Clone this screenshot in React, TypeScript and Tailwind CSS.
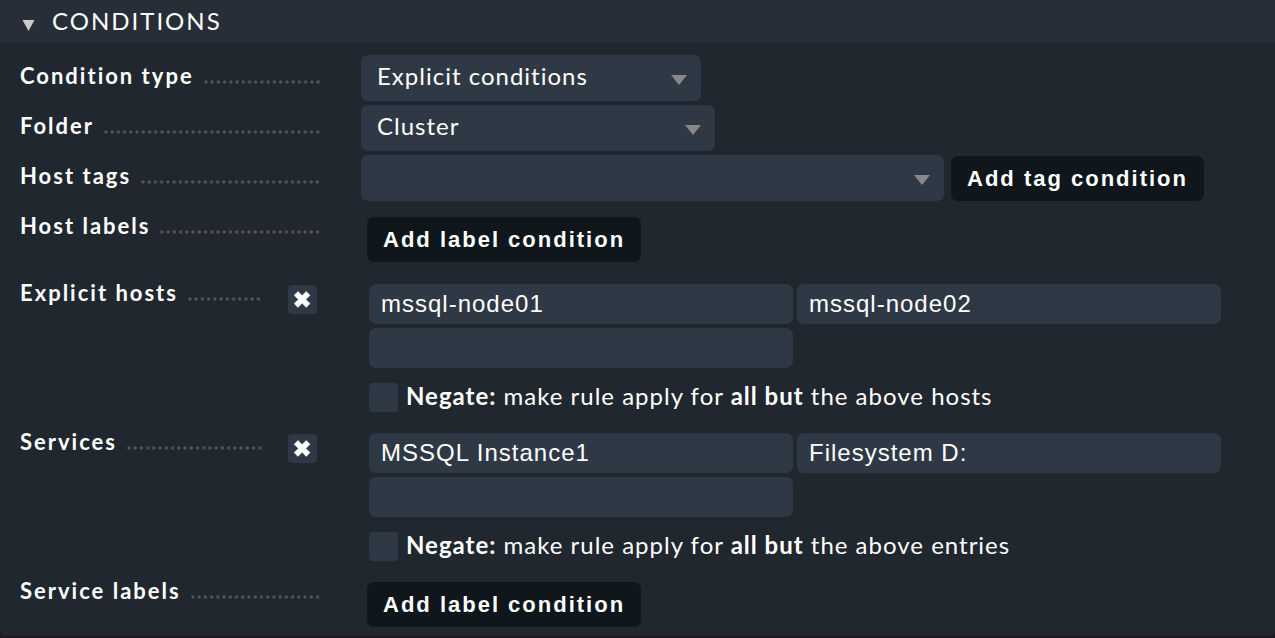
import { useId, useState, type ReactNode } from "react";

const LATO = "font-[Lato,sans-serif]";
const ARIAL = "font-['Liberation_Sans',Arial,sans-serif]";

function DottedLeader() {
  const id = useId();
  return (
    <svg className="mt-[25px] h-1 min-w-0 flex-1" aria-hidden="true">
      <defs>
        <pattern id={id} width="6.23" height="4" patternUnits="userSpaceOnUse">
          <circle cx="1.9" cy="2" r="1.7" fill="#50545b" />
        </pattern>
      </defs>
      <rect width="100%" height="4" fill={`url(#${id})`} />
    </svg>
  );
}

function Row({ label, toggle, children }: { label: string; toggle?: boolean; children: ReactNode }) {
  const id = useId();
  return (
    <div className="flex items-start">
      <div className="flex w-[361px] shrink-0 pl-5">
        <div
          className={`flex ${toggle ? "w-[241px]" : "w-[300px]"} shrink-0 items-start gap-[10px] text-[22px] leading-[42px] font-bold tracking-[2px] whitespace-nowrap`}
        >
          {toggle ? <label htmlFor={id}>{label}</label> : <span>{label}</span>}
          <DottedLeader />
        </div>
        {toggle && (
          <div className="relative mt-[13px] ml-[27px] size-[29px]">
            <input
              id={id}
              type="checkbox"
              defaultChecked
              className="peer block size-full appearance-none rounded-[4px] bg-[#2f3945]"
            />
            <svg
              viewBox="0 0 29 29"
              className="pointer-events-none absolute inset-0 hidden size-full peer-checked:block"
              aria-hidden="true"
            >
              <path
                d="M10 6.400l4.100 4.200 4.100-4.200 3.900 3.900-4.300 4.100 4.300 4.200-3.900 3.800-4.100-4.100-4.100 4.100-3.900-3.800 4.300-4.200-4.300-4.100z"
                fill="#fff"
                stroke="#fff"
                strokeWidth="0.4"
                strokeLinejoin="round"
              />
            </svg>
          </div>
        )}
      </div>
      <div className="min-w-0 flex-1">{children}</div>
    </div>
  );
}

function Dropdown({ label, value, width }: { label: string; value: string; width: string }) {
  return (
    <div className={`relative mb-1 h-[46px] ${width}`}>
      <select
        aria-label={label}
        className="block size-full appearance-none rounded-[7px] bg-[#2f3945] pr-10 pb-1 pl-4 text-[24px] tracking-[1px] text-white"
      >
        <option>{value}</option>
      </select>
      <svg viewBox="0 0 16 10" className="pointer-events-none absolute top-5 right-[14px] h-[10px] w-4" aria-hidden="true">
        <path d="M0 0h16L8 10z" fill="#888" />
      </svg>
    </div>
  );
}

function ActionButton({ children }: { children: ReactNode }) {
  return (
    <button
      type="button"
      className={`${ARIAL} h-[45px] rounded-[7px] bg-[#10171c] px-4 text-[22px] font-bold tracking-[2px] whitespace-nowrap text-white`}
    >
      {children}
    </button>
  );
}

function ListField({ name, values, noun }: { name: string; values: string[]; noun: string }) {
  return (
    <div className="mr-[54px] ml-2 pt-3 pb-[9px]">
      <div className="grid grid-cols-2 gap-1">
        {[...values, ""].map((value, i) => (
          <input
            key={i}
            type="text"
            aria-label={`${name} ${i + 1}`}
            defaultValue={value}
            className={`${ARIAL} h-10 w-full min-w-0 rounded-[7px] bg-[#2f3945] px-3 text-[24px] tracking-[1px] text-white`}
          />
        ))}
      </div>
      <label className="mt-[15px] flex h-[29px] items-start gap-2 text-[24px] leading-[25px] tracking-[1px] whitespace-nowrap">
        <input
          type="checkbox"
          className="size-[29px] shrink-0 appearance-none rounded-[4px] bg-[#2f3945] checked:bg-[#5d6b7c]"
        />
        <span>
          <b>Negate:</b> make rule apply for <b>all but</b> the above {noun}
        </span>
      </label>
    </div>
  );
}

export default function App() {
  const [open, setOpen] = useState(true);
  return (
    <div className={`${LATO} min-h-screen bg-[#1e1a24] text-white`}>
      <section className="overflow-hidden rounded-b-[6px] bg-[#21272e] pb-[9px]">
        <h2 className="bg-[#272e38]">
          <button
            type="button"
            aria-expanded={open}
            onClick={() => setOpen(!open)}
            className="flex h-[43px] w-full items-center pb-[2px] pl-[22px] text-[24px] tracking-[2px]"
          >
            <svg viewBox="0 0 13 12" className="mt-2 mr-[17px] h-3 w-[13px]" aria-hidden="true">
              <path d="M0.500 1h12L6.500 12z" fill="#ccc" />
            </svg>
            CONDITIONS
          </button>
        </h2>
        {open && (
          <div className="pt-3">
            <Row label="Condition type">
              <Dropdown label="Condition type" value="Explicit conditions" width="w-[340px]" />
            </Row>
            <Row label="Folder">
              <Dropdown label="Folder" value="Cluster" width="w-[354px]" />
            </Row>
            <Row label="Host tags">
              <div className="flex gap-[7px]">
                <Dropdown label="Host tags" value="" width="w-[583px]" />
                <div className="pt-[1px]">
                  <ActionButton>Add tag condition</ActionButton>
                </div>
              </div>
            </Row>
            <Row label="Host labels">
              <div className="flex pt-3 pb-[10px] pl-[6px]">
                <ActionButton>Add label condition</ActionButton>
              </div>
            </Row>
            <Row label="Explicit hosts" toggle>
              <ListField name="Explicit host" values={["mssql-node01", "mssql-node02"]} noun="hosts" />
            </Row>
            <Row label="Services" toggle>
              <ListField name="Service" values={["MSSQL Instance1", "Filesystem D:"]} noun="entries" />
            </Row>
            <Row label="Service labels">
              <div className="flex pt-3 pl-[6px]">
                <ActionButton>Add label condition</ActionButton>
              </div>
            </Row>
          </div>
        )}
      </section>
    </div>
  );
}
